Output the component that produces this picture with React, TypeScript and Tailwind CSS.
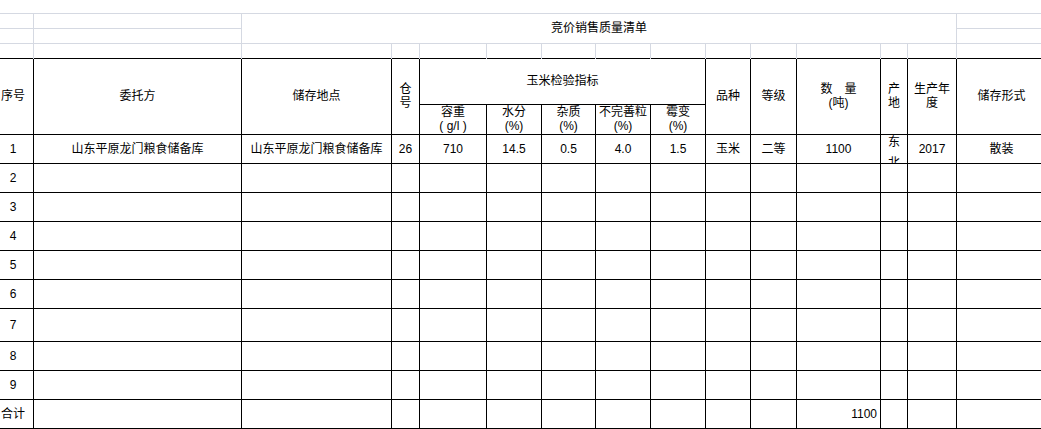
import React from "react";

// column widths (first col starts 8px off-screen, last one runs past the right edge)
const COLS = [41, 208, 150, 28, 67, 55, 54, 55, 55, 45, 46, 84, 27, 49, 90];

const light = "border-[#d5d9e2]";
const cell = "border border-black p-0 text-center align-middle";

const dataRows: { no: string; h: string; values?: string[] }[] = [
  { no: "1", h: "h-[29px]", values: ["山东平原龙门粮食储备库", "山东平原龙门粮食储备库", "26", "710", "14.5", "0.5", "4.0", "1.5", "玉米", "二等", "1100", "东北", "2017", "散装"] },
  { no: "2", h: "h-[29px]" },
  { no: "3", h: "h-[29px]" },
  { no: "4", h: "h-[29px]" },
  { no: "5", h: "h-[29px]" },
  { no: "6", h: "h-[29px]" },
  { no: "7", h: "h-[33px]" },
  { no: "8", h: "h-[29px]" },
  { no: "9", h: "h-[29px]" },
];

function HeaderCell({ children, className = "", ...rest }: React.TdHTMLAttributes<HTMLTableCellElement>) {
  return (
    <td {...rest} className={`${cell} px-[2px] leading-[14px] ${className}`}>
      {children}
    </td>
  );
}

export default function App() {
  return (
    <div
      className="h-[429px] w-[1041px] overflow-hidden bg-white text-[12px] text-black"
      style={{ fontFamily: '"Liberation Sans", "Noto Sans CJK SC", sans-serif' }}
    >
      <table className="ml-[-8px] table-fixed border-collapse" style={{ width: COLS.reduce((a, b) => a + b, 0) }}>
        <colgroup>
          {COLS.map((w, i) => (
            <col key={i} style={{ width: w }} />
          ))}
        </colgroup>
        <tbody>
          {/* spreadsheet rows above the form */}
          <tr className="h-[13px]">
            <td colSpan={15} className="p-0" />
          </tr>
          <tr className="h-[15px]">
            <td className={`border-t border-r border-b p-0 ${light}`} />
            <td className={`border-t border-r border-b p-0 ${light}`} />
            <td colSpan={12} rowSpan={2} className={`border-t border-r border-b p-0 text-center align-middle ${light}`}>
              竞价销售质量清单
            </td>
            <td className={`border-t border-b p-0 ${light}`} />
          </tr>
          <tr className="h-[15px]">
            <td className={`border-r border-b p-0 ${light}`} />
            <td className={`border-r border-b p-0 ${light}`} />
            <td className={`border-b p-0 ${light}`} />
          </tr>
          <tr className="h-[15px]">
            {COLS.map((_, i) => (
              <td key={i} className={`${i < 14 ? "border-r" : ""} p-0 ${light}`} />
            ))}
          </tr>

          {/* form header */}
          <tr className="h-[46px]">
            <HeaderCell rowSpan={2}>序号</HeaderCell>
            <HeaderCell rowSpan={2}>委托方</HeaderCell>
            <HeaderCell rowSpan={2}>储存地点</HeaderCell>
            <HeaderCell rowSpan={2} className="!px-[7px]">仓号</HeaderCell>
            <HeaderCell colSpan={5}>玉米检验指标</HeaderCell>
            <HeaderCell rowSpan={2}>品种</HeaderCell>
            <HeaderCell rowSpan={2}>等级</HeaderCell>
            <HeaderCell rowSpan={2}>
              数　量
              <br />
              (吨)
            </HeaderCell>
            <HeaderCell rowSpan={2} className="!px-[7px]">产地</HeaderCell>
            <HeaderCell rowSpan={2}>生产年度</HeaderCell>
            <HeaderCell rowSpan={2}>储存形式</HeaderCell>
          </tr>
          <tr className="h-[30px]">
            <HeaderCell>
              容重
              <br />( g/l )
            </HeaderCell>
            <HeaderCell>
              水分
              <br />(%)
            </HeaderCell>
            <HeaderCell>
              杂质
              <br />(%)
            </HeaderCell>
            <HeaderCell>
              不完善粒
              <br />(%)
            </HeaderCell>
            <HeaderCell>
              霉变
              <br />(%)
            </HeaderCell>
          </tr>

          {/* data rows */}
          {dataRows.map((r) => (
            <tr key={r.no} className={r.h}>
              <td className={cell}>{r.no}</td>
              {Array.from({ length: 14 }).map((_, i) => {
                const v = r.values?.[i] ?? "";
                if (v === "东北") {
                  // the two-line text overflows the row, Excel clips it
                  return (
                    <td key={i} className={cell}>
                      <div className="h-[28px] overflow-hidden">
                        <div className="mx-auto mt-[-3px] w-[12px] leading-[21px]">东北</div>
                      </div>
                    </td>
                  );
                }
                return (
                  <td key={i} className={cell}>
                    {v}
                  </td>
                );
              })}
            </tr>
          ))}

          <tr className="h-[29px]">
            <td className={cell}>合计</td>
            {Array.from({ length: 14 }).map((_, i) => (
              <td key={i} className={`${cell} ${i === 10 ? "!text-right !pr-[3px]" : ""}`}>
                {i === 10 ? "1100" : ""}
              </td>
            ))}
          </tr>
        </tbody>
      </table>
    </div>
  );
}
